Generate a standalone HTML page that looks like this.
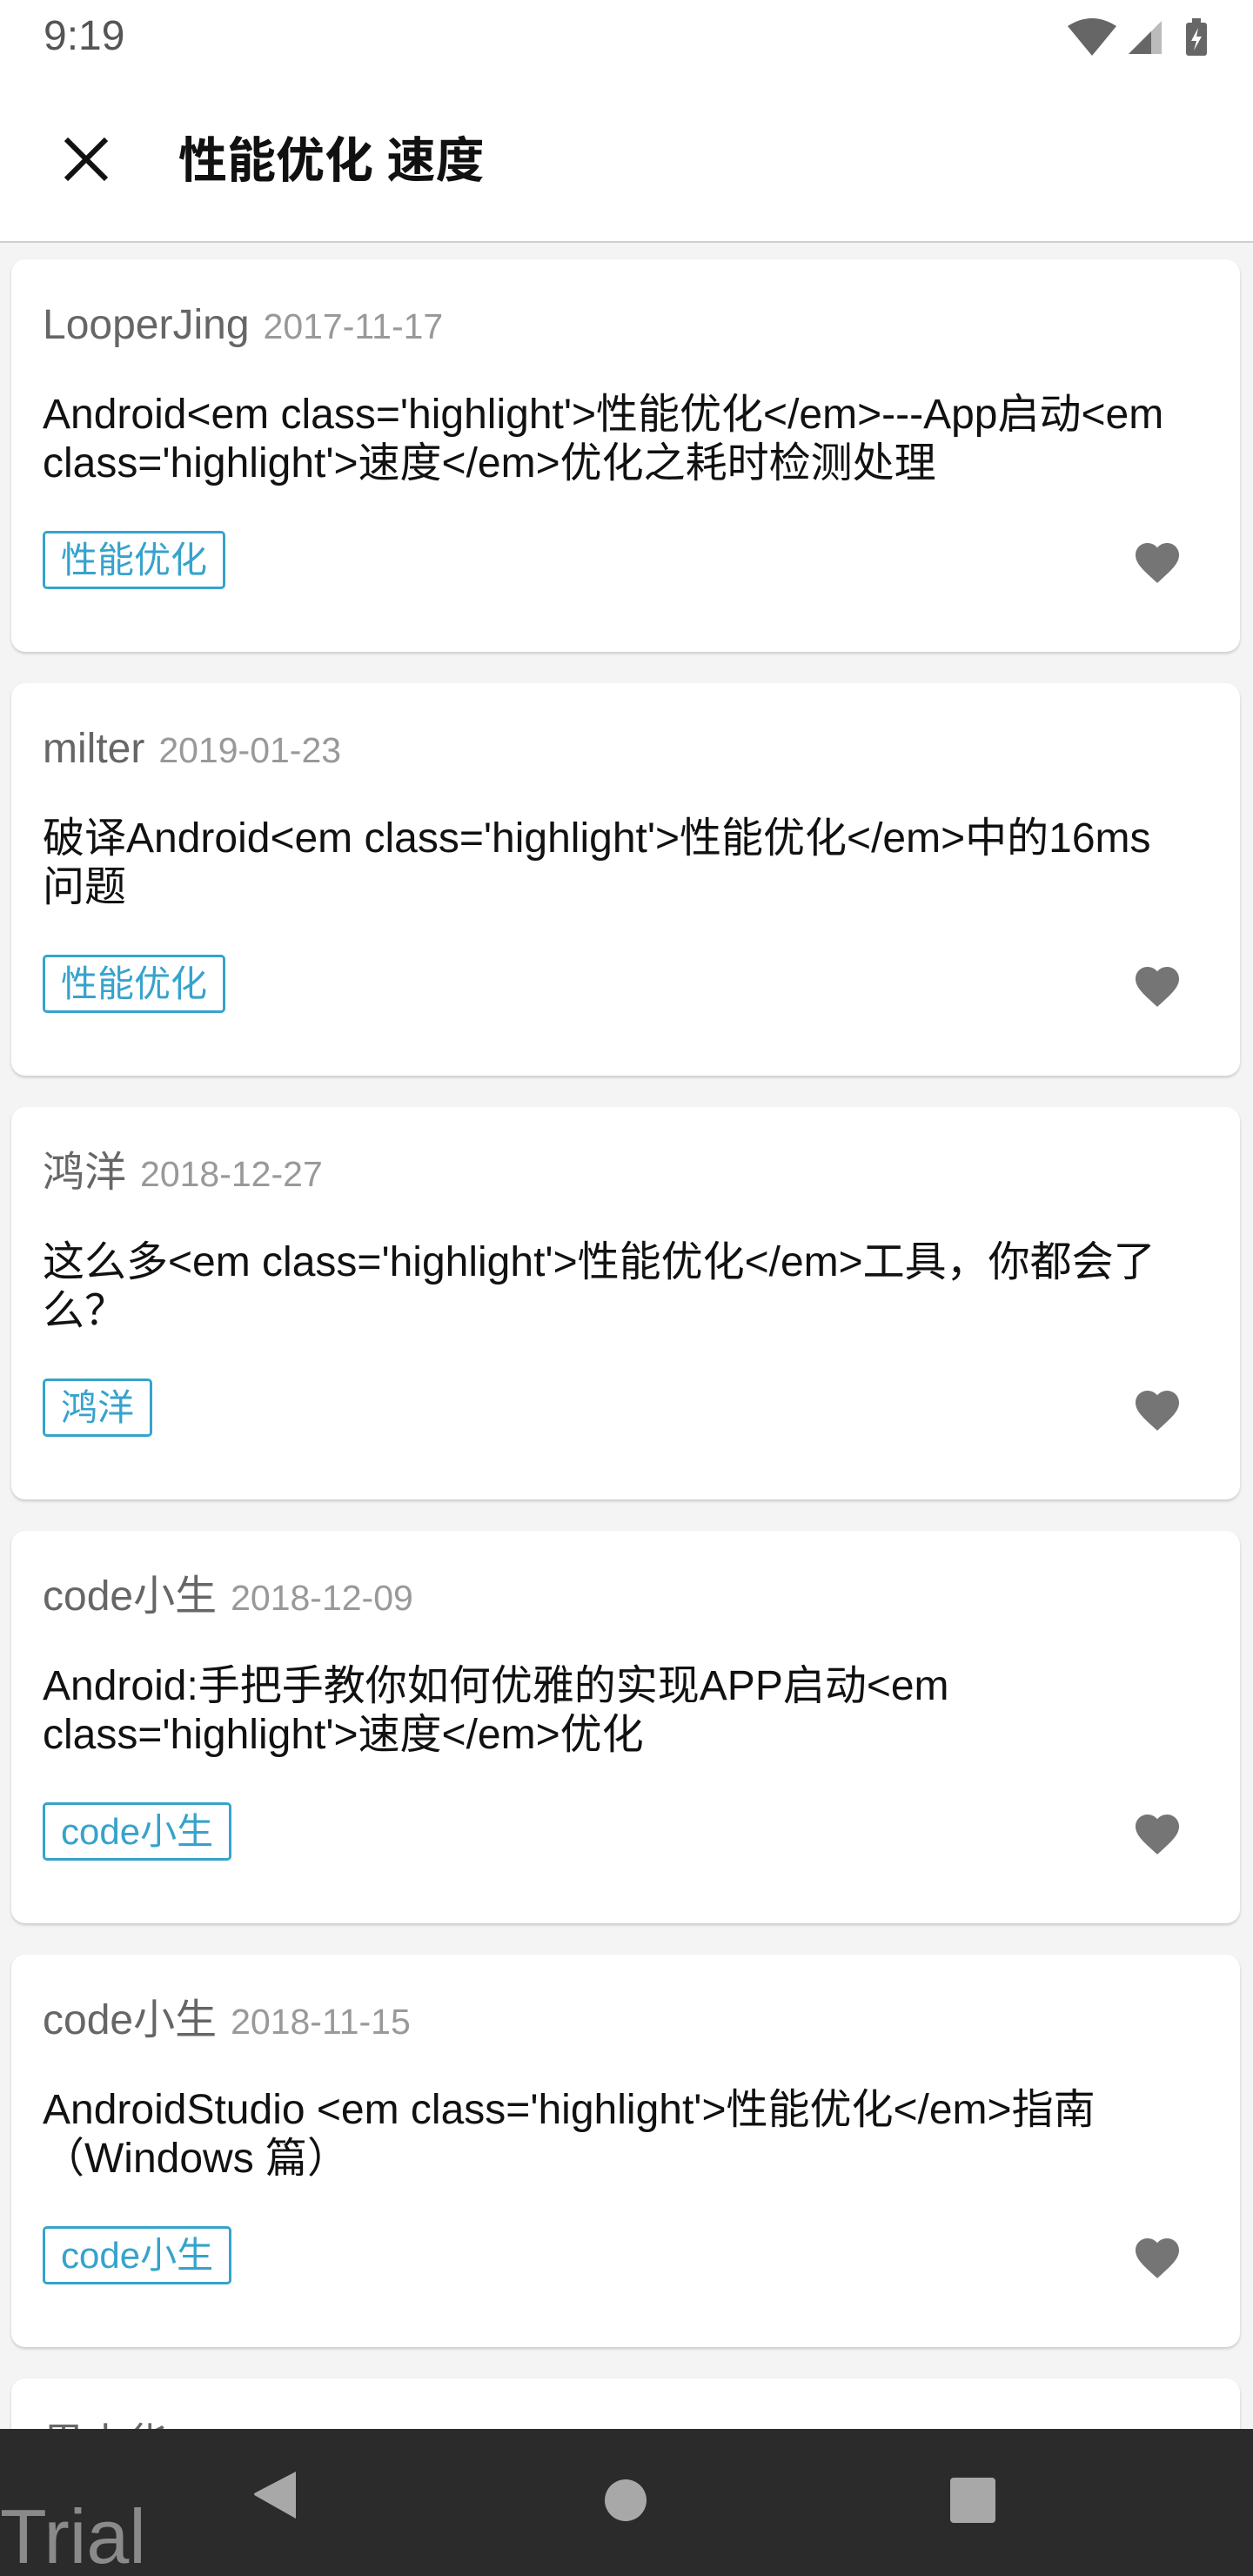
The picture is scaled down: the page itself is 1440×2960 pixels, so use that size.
<!DOCTYPE html>
<html style="height:2960px;overflow:hidden"><head><meta charset="utf-8"><style>
*{margin:0;padding:0;box-sizing:border-box}
body{width:1440px;height:2960px;overflow:hidden;background:#f4f4f4;font-family:"Liberation Sans","Noto Sans CJK SC",sans-serif;position:relative}
#wrap{position:absolute;left:0;top:0;width:1440px;height:2960px;overflow:hidden}
.status{position:absolute;left:0;top:0;width:1440px;height:90px;background:#fff}
.time{position:absolute;left:50px;top:14px;font-size:48px;color:#555}
.toolbar{position:absolute;left:0;top:90px;width:1440px;height:189px;background:#fff;border-bottom:2px solid #cfcfcf}
.title{position:absolute;left:205px;top:50px;font-size:56px;font-weight:bold;color:#111;white-space:nowrap}
.card{position:absolute;left:13px;width:1412px;height:451px;background:#fff;border-radius:16px;box-shadow:0 2px 3px rgba(0,0,0,.18)}
.au{position:absolute;left:36px;top:48px;font-size:48px;line-height:56px;height:56px;color:#666;white-space:nowrap}
.au span{font-size:41px;color:#999;margin-left:16px}
.tt{position:absolute;left:36px;top:151px;font-size:48px;line-height:56px;color:#111;white-space:nowrap}
.tag{position:absolute;left:36px;top:312px;height:67px;border:3px solid #36a3cc;border-radius:5px;color:#36a3cc;font-size:42px;line-height:61px;padding:0 18px}
.heart{position:absolute;left:1287px;top:318px}
.nav{position:absolute;left:0;top:2791px;width:1440px;height:169px;background:#2b2b2b}
.trial{position:absolute;left:0;top:80px;font-size:88px;color:#8a8a8a;line-height:1}
</style></head><body><div id="wrap">
<div class="status"><div class="time">9:19</div>
<svg style="position:absolute;left:1225px;top:20px" width="170" height="44" viewBox="0 0 170 44">
<path d="M2 10 Q30 -8 58 10 L40 32 L30 44 Z" fill="#666"/>
<path d="M44 28 l10 10 M54 28 l-10 10" stroke="#fff" stroke-width="4"/>
<path d="M72 42 L110 4 L110 42 Z" fill="#bbb"/><path d="M72 42 L98 16 L98 42 Z" fill="#666"/>
<rect x="138" y="6" width="24" height="38" rx="3" fill="#666"/><rect x="145" y="1" width="10" height="6" fill="#666"/>
<path d="M152 12 L144 27 L150 27 L147 38 L156 22 L150 22 Z" fill="#fff"/>
</svg></div>
<div class="toolbar">
<svg style="position:absolute;left:72px;top:66px" width="54" height="54" viewBox="0 0 54 54"><path d="M4 4 L50 50 M50 4 L4 50" stroke="#111" stroke-width="6"/></svg>
<div class="title">性能优化 速度</div></div>

<div class="card" style="top:298px"><div class="au">LooperJing<span>2017-11-17</span></div><div class="tt">Android&lt;em class='highlight'&gt;性能优化&lt;/em&gt;---App启动&lt;em<br>class='highlight'&gt;速度&lt;/em&gt;优化之耗时检测处理</div><div class="tag">性能优化</div><svg class="heart" width="60" height="56" viewBox="0 0 24 22"><path d="M12 21.35l-1.45-1.32C5.4 15.36 2 12.28 2 8.5 2 5.42 4.42 3 7.5 3c1.74 0 3.41.81 4.5 2.09C13.09 3.81 14.76 3 16.5 3 19.58 3 22 5.42 22 8.5c0 3.78-3.4 6.86-8.55 11.54L12 21.35z" fill="#757575"/></svg></div>

<div class="card" style="top:785px"><div class="au">milter<span>2019-01-23</span></div><div class="tt">破译Android&lt;em class='highlight'&gt;性能优化&lt;/em&gt;中的16ms<br>问题</div><div class="tag">性能优化</div><svg class="heart" width="60" height="56" viewBox="0 0 24 22"><path d="M12 21.35l-1.45-1.32C5.4 15.36 2 12.28 2 8.5 2 5.42 4.42 3 7.5 3c1.74 0 3.41.81 4.5 2.09C13.09 3.81 14.76 3 16.5 3 19.58 3 22 5.42 22 8.5c0 3.78-3.4 6.86-8.55 11.54L12 21.35z" fill="#757575"/></svg></div>

<div class="card" style="top:1272px"><div class="au">鸿洋<span>2018-12-27</span></div><div class="tt">这么多&lt;em class='highlight'&gt;性能优化&lt;/em&gt;工具，你都会了<br>么？</div><div class="tag">鸿洋</div><svg class="heart" width="60" height="56" viewBox="0 0 24 22"><path d="M12 21.35l-1.45-1.32C5.4 15.36 2 12.28 2 8.5 2 5.42 4.42 3 7.5 3c1.74 0 3.41.81 4.5 2.09C13.09 3.81 14.76 3 16.5 3 19.58 3 22 5.42 22 8.5c0 3.78-3.4 6.86-8.55 11.54L12 21.35z" fill="#757575"/></svg></div>

<div class="card" style="top:1759px"><div class="au">code小生<span>2018-12-09</span></div><div class="tt">Android:手把手教你如何优雅的实现APP启动&lt;em<br>class='highlight'&gt;速度&lt;/em&gt;优化</div><div class="tag">code小生</div><svg class="heart" width="60" height="56" viewBox="0 0 24 22"><path d="M12 21.35l-1.45-1.32C5.4 15.36 2 12.28 2 8.5 2 5.42 4.42 3 7.5 3c1.74 0 3.41.81 4.5 2.09C13.09 3.81 14.76 3 16.5 3 19.58 3 22 5.42 22 8.5c0 3.78-3.4 6.86-8.55 11.54L12 21.35z" fill="#757575"/></svg></div>

<div class="card" style="top:2246px"><div class="au">code小生<span>2018-11-15</span></div><div class="tt">AndroidStudio &lt;em class='highlight'&gt;性能优化&lt;/em&gt;指南<br>（Windows 篇）</div><div class="tag">code小生</div><svg class="heart" width="60" height="56" viewBox="0 0 24 22"><path d="M12 21.35l-1.45-1.32C5.4 15.36 2 12.28 2 8.5 2 5.42 4.42 3 7.5 3c1.74 0 3.41.81 4.5 2.09C13.09 3.81 14.76 3 16.5 3 19.58 3 22 5.42 22 8.5c0 3.78-3.4 6.86-8.55 11.54L12 21.35z" fill="#757575"/></svg></div>

<div class="card" style="top:2733px;height:200px"><div class="au">果小华<span>2018</span></div></div>

<div class="nav"><div class="trial">Trial</div>
<svg style="position:absolute;left:290px;top:47px" width="56" height="58" viewBox="0 0 56 58"><path d="M50 2 L50 56 L4 30 Q0 28 4 26 Z" fill="#a8a8a8"/></svg>
<div style="position:absolute;left:695px;top:58px;width:48px;height:48px;border-radius:50%;background:#a8a8a8"></div>
<div style="position:absolute;left:1092px;top:56px;width:52px;height:52px;border-radius:4px;background:#a8a8a8"></div>
</div>
</div></body></html>
